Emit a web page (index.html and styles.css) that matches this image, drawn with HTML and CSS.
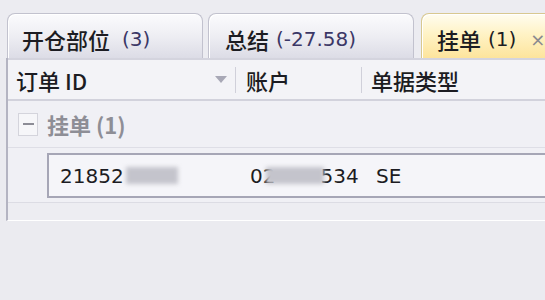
FILE: index.html
```html
<!DOCTYPE html>
<html>
<head>
<meta charset="utf-8">
<link rel="stylesheet" href="styles.css">
</head>
<body>
<div class="tabs">
  <div class="tab tab1"><span class="cn">开仓部位</span> <span class="num">(3)</span></div>
  <div class="tab tab2"><span class="cn">总结</span> <span class="num">(-27.58)</span></div>
  <div class="tab active"><span class="cn">挂单</span> <span class="numd">(1)</span><span class="close">×</span></div>
</div>
<div class="panel">
  <div class="header">
    <div class="hcol c1"><span>订单 ID</span><span class="arrow"></span></div>
    <div class="hcol c2">账户</div>
    <div class="hcol c3">单据类型</div>
  </div>
  <div class="group">
    <span class="toggle"><span class="minus"></span></span>
    <span class="gtitle">挂单 (1)</span>
  </div>
  <div class="rows">
    <div class="row">
      <div class="cell d1">21852<span class="blur b1"></span></div>
      <div class="cell d2">02<span class="blur b2"></span>534</div>
      <div class="cell d3">SE</div>
    </div>
  </div>
  <div class="foot"></div>
</div>
</body>
</html>
```
FILE: styles.css
```css
html, body {
  margin: 0;
  padding: 0;
}
body {
  width: 545px;
  height: 300px;
  overflow: hidden;
  background: #ebebf0;
  font-family: "DejaVu Sans", "Noto Sans CJK SC", sans-serif;
  font-size: 20px;
  color: #1c1c22;
}
.tabs {
  display: flex;
  gap: 5px;
  padding: 13px 0 0 7px;
  height: 58px;
  box-sizing: border-box;
  background: #ececf1;
}
.tab {
  flex: none;
  width: 196px;
  height: 45px;
  box-sizing: border-box;
  border: 1px solid #c2c2ce;
  border-bottom: none;
  border-radius: 8px 8px 0 0;
  background: linear-gradient(#fbfbfd 0%, #eeeef3 50%, #dcdce6 100%);
  box-shadow: inset 1px 1px 0 #ffffff;
  padding: 6px 0 0 14px;
  display: flex;
  align-items: center;
  white-space: nowrap;
  overflow: hidden;
}
.tab1 .cn {
  margin-right: 12px;
}
.tab2 {
  width: 206px;
  padding-left: 16px;
}
.tab .cn {
  font-family: "Noto Sans CJK SC", sans-serif;
  font-weight: 500;
  font-size: 22px;
}
.tab2 .cn,
.active .cn {
  margin-right: 7px;
}
.num {
  color: #3b3766;
}
.numd {
  color: #1c1c22;
}
.active {
  width: 140px;
  margin-left: 2px;
  border-color: #d8c890;
  background: linear-gradient(#fffdf0 0%, #fff3c6 45%, #fde49c 100%);
  padding-left: 15px;
}
.close {
  margin-left: 14px;
  color: #8a8a90;
  font-size: 18px;
}
.panel {
  margin-left: 6px;
  border-left: 2px solid #b4b4c2;
  height: 163px;
  background: #f0f0f5;
  box-sizing: border-box;
  border-bottom: 1px solid #ffffff;
}
.header {
  display: flex;
  height: 43px;
  border-top: 2px solid #d4d4de;
  border-bottom: 2px solid #d2d2dc;
  background: #f3f3f7;
  box-sizing: border-box;
  align-items: center;
  font-family: "Noto Sans CJK SC", "DejaVu Sans", sans-serif;
  font-weight: 500;
  font-size: 22px;
}
.hcol {
  display: flex;
  align-items: center;
  height: 26px;
  box-sizing: border-box;
}
.c1 {
  width: 228px;
  padding-left: 8px;
  justify-content: space-between;
  padding-right: 8px;
  border-right: 1px solid #d0d0da;
}
.arrow {
  width: 0;
  height: 0;
  border-left: 6px solid transparent;
  border-right: 6px solid transparent;
  border-top: 7px solid #a8a8b6;
}
.c2 {
  width: 126px;
  padding-left: 10px;
  border-right: 1px solid #d0d0da;
}
.c3 {
  padding-left: 9px;
}
.group {
  display: flex;
  align-items: center;
  height: 47px;
  padding-left: 10px;
  border-bottom: 1px solid #dedee6;
  box-sizing: border-box;
}
.toggle {
  width: 20px;
  height: 23px;
  box-sizing: border-box;
  border: 1px solid #d4d4dc;
  background: #f6f6f9;
  display: flex;
  align-items: center;
  justify-content: center;
  margin-right: 9px;
}
.minus {
  width: 11px;
  height: 2px;
  background: #8c8c96;
}
.gtitle {
  font-family: "Noto Sans CJK SC", sans-serif;
  font-weight: bold;
  font-size: 22px;
  color: #8e8e96;
}
.rows {
  padding: 5px 0 0 39px;
  height: 55px;
  box-sizing: border-box;
  border-bottom: 1px solid #dcdce4;
}
.row {
  display: flex;
  align-items: center;
  height: 45px;
  box-sizing: border-box;
  border: 2px solid #a6a6b6;
  border-right: none;
  background: #f5f5f9;
}
.cell {
  display: flex;
  align-items: center;
}
.d1 {
  width: 190px;
  padding-left: 11px;
}
.d2 {
  width: 124px;
}
.d3 {
  padding-left: 2px;
}
.blur {
  display: inline-block;
  height: 17px;
  background: #c4c4cc;
  filter: blur(2px);
}
.b1 {
  width: 52px;
  margin-left: 2px;
}
.b2 {
  width: 58px;
  margin-left: -9px;
  margin-right: -4px;
}
.foot {
  height: 17px;
  background: #ededf2;
}
```
